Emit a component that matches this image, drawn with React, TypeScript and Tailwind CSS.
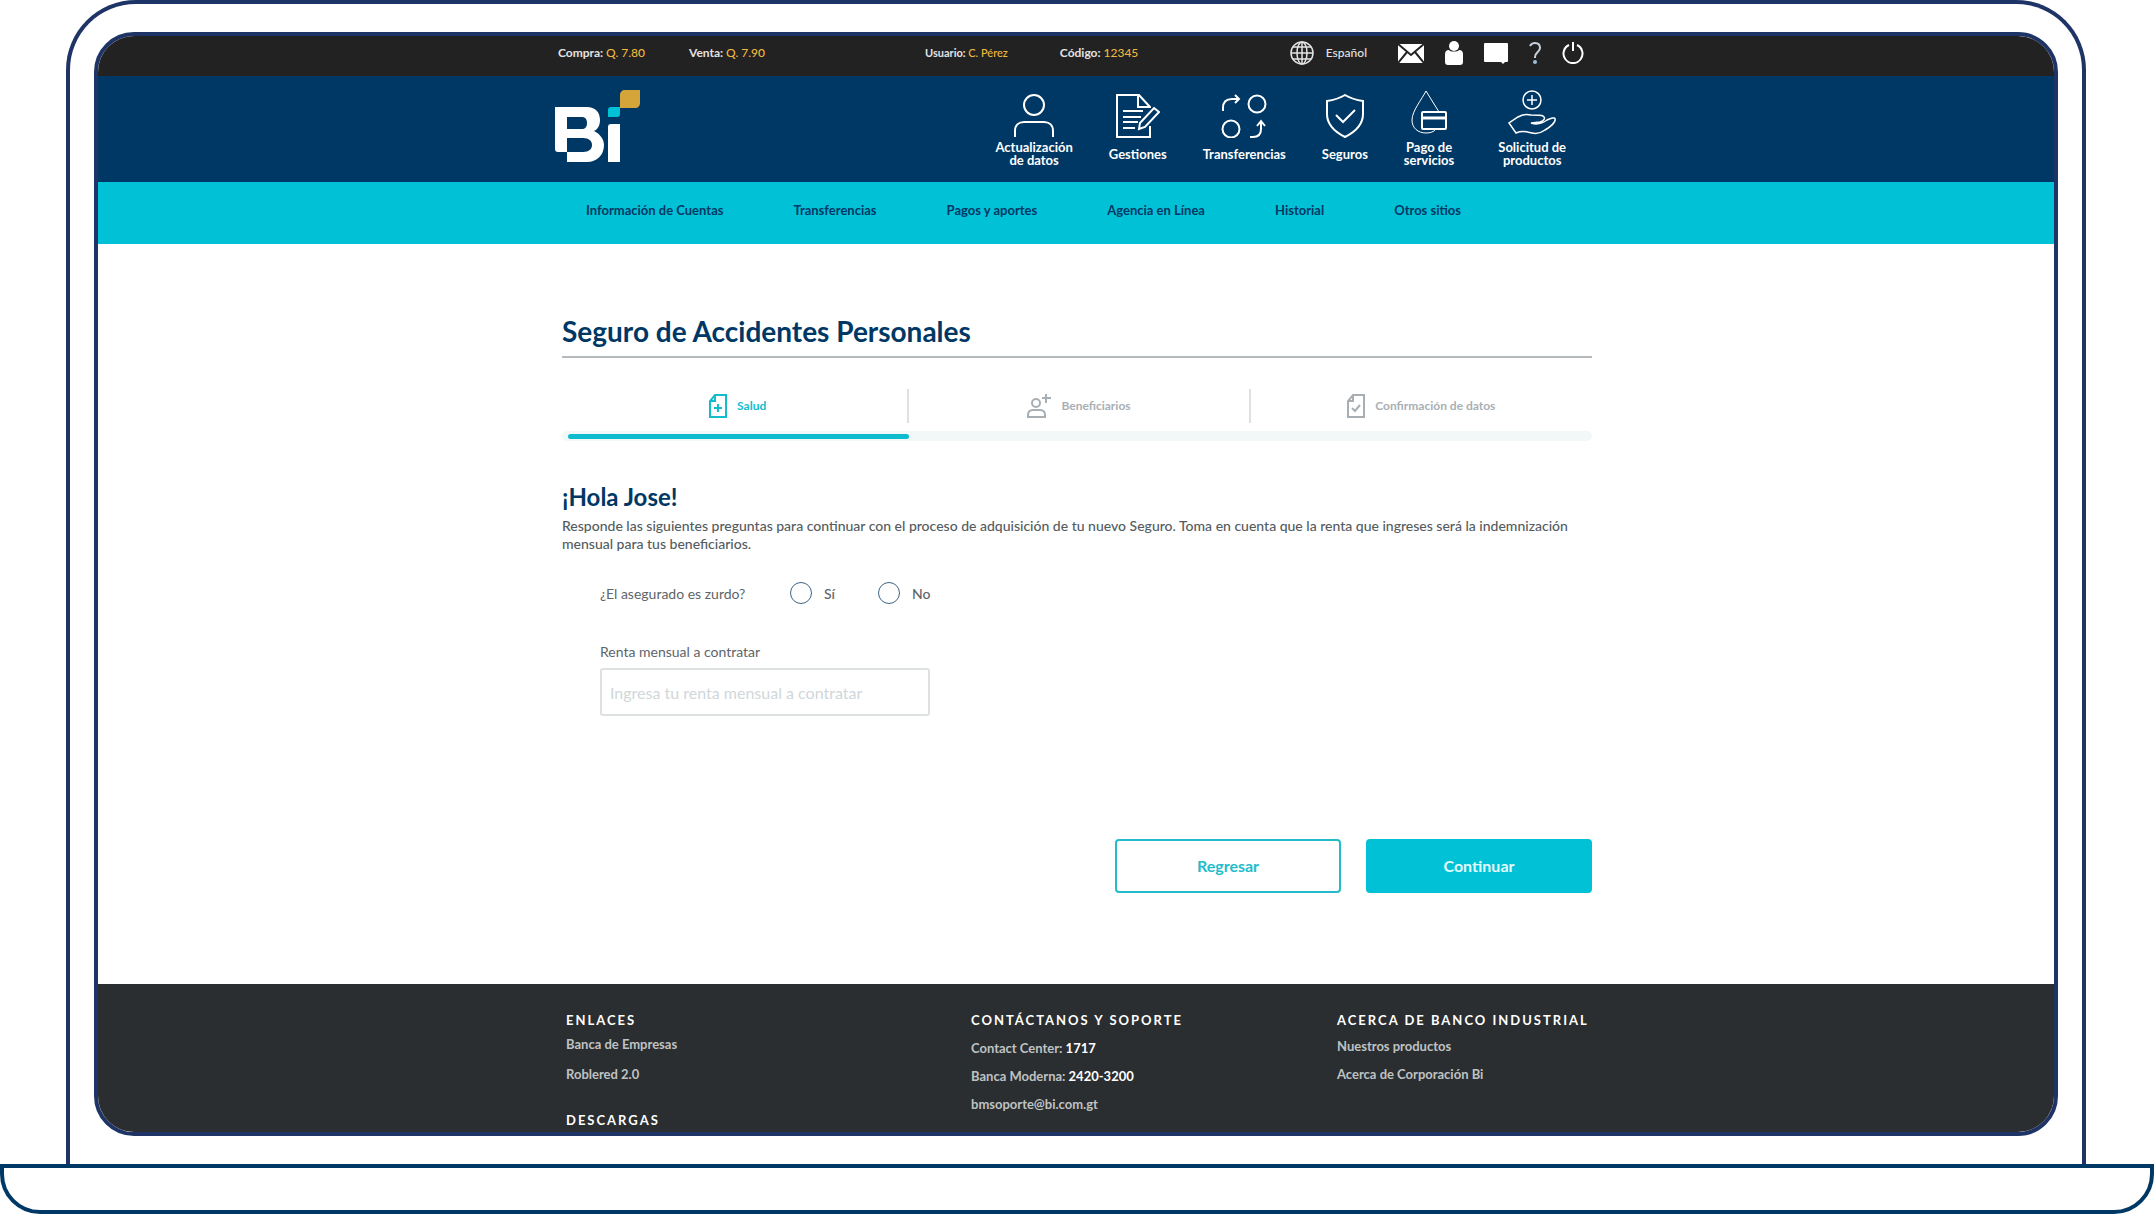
import React, { useState } from 'react';

const SHORTCUTS = [
    {
        label: ['Actualización', 'de datos'],
        icon: (
            <svg className="w-[44px] h-[48px]" viewBox="0 0 44 48" fill="none" stroke="currentColor" strokeWidth="2">
                <circle cx="22" cy="15" r="10" />
                <path d="M3 47v-6c0-6 4-9 9-9h20c5 0 9 3 9 9v6" />
            </svg>
        ),
    },
    {
        label: ['Gestiones'],
        icon: (
            <svg className="w-[44px] h-[48px]" viewBox="0 0 44 48" fill="none" stroke="currentColor" strokeWidth="2">
                <path d="M34 18v-1L23 5H1v42h33V36M22 5v12h12" />
                <path d="M7 21h20M7 27h18M7 32h15M7 38h12" />
                <path d="M38 18l5 4-14 15-6 2 1-6z" />
            </svg>
        ),
    },
    {
        label: ['Transferencias'],
        icon: (
            <svg className="w-[46px] h-[48px]" viewBox="0 0 46 48" fill="none" stroke="currentColor" strokeWidth="2">
                <circle cx="36" cy="14" r="8.500" />
                <circle cx="10" cy="39" r="8.500" />
                <path d="M2 21v-3c0-6 3-9 9-9h7M14 5l4 4-4 4" />
                <path d="M29 47h3c6 0 8-3 8-8v-7M36 36l4-5 4 5" />
            </svg>
        ),
    },
    {
        label: ['Seguros'],
        icon: (
            <svg className="w-[40px] h-[48px]" viewBox="0 0 40 48" fill="none" stroke="currentColor" strokeWidth="2">
                <path d="M20 5c5 3 11 5 18 6v13c0 11-8 18-18 23C10 42 2 35 2 24V11c7-1 13-3 18-6z" />
                <path d="M11 25l7 7 12-12" />
            </svg>
        ),
    },
    {
        label: ['Pago de', 'servicios'],
        icon: (
            <svg className="w-[38px] h-[48px]" viewBox="0 0 38 48" fill="none" stroke="currentColor">
                <path strokeWidth="1" d="M29 22L16 1C12 9 2 21 2 30c0 8 6 13 14 13 4 0 8-1 10-4" />
                <rect x="12" y="22" width="24" height="17" rx="1" strokeWidth="2" />
                <path strokeWidth="3" d="M12 28h24" />
            </svg>
        ),
    },
    {
        label: ['Solicitud de', 'productos'],
        icon: (
            <svg className="w-[50px] h-[48px]" viewBox="0 0 50 48" fill="none" stroke="currentColor" strokeWidth="1.5">
                <circle cx="25" cy="10" r="9" />
                <path d="M25 5v10M20 10h10" />
                <path d="M9 43l-7-10 9-6c5-3 9-3 13-2 5 0 10 0 12 1 3 2 1 5-3 6l-9 1c6 2 12 0 16-3 4-2 8-3 8-1 1 3-5 8-10 11-4 3-9 4-13 3-5-1-9-3-16 0z" />
            </svg>
        ),
    },
];

const SECTIONS = ['Información de Cuentas', 'Transferencias', 'Pagos y aportes', 'Agencia en Línea', 'Historial', 'Otros sitios'];

const Logo: React.FC = () => (
    <svg className="w-[85px] h-[72px]" viewBox="0 0 85 72" role="img" aria-label="Bi">
        <path
            fill="#fff"
            fillRule="evenodd"
            d="M0 17h32c8 0 13 5 13 13 0 5-2 9-6 11 6 3 10 8 10 14 0 10-7 17-17 17H12V62H3c-2 0-3-1-3-3zM12 27v12h15c3 0 5-2 5-6s-2-6-5-6zM12 48v14h16c6 0 9-3 9-7s-3-7-9-7z"
        />
        <path fill="#fff" d="M56 34h9v38H53V37c0-2 1-3 3-3z" />
        <path fill="#00c1d5" d="M56 17h9v7c0 2-1 3-3 3h-9v-7c0-2 1-3 3-3z" />
        <path fill="#d6a53a" d="M70 0h15v13c0 3-2 5-5 5H65V5c0-3 2-5 5-5z" />
    </svg>
);

const TopBar: React.FC = () => (
    <div className="bg-[#222222] text-[#e3e3e3] h-10 shrink-0">
        <div className="max-w-[1036px] h-full mx-auto pr-2.5 pb-1.5 flex items-center text-[12px] font-bold whitespace-nowrap">
            <div className="flex gap-11">
                <span>Compra: <span className="font-medium text-[#f0b840]">Q. 7.80</span></span>
                <span>Venta: <span className="font-medium text-[#f0b840]">Q. 7.90</span></span>
            </div>
            <div className="ml-40 flex items-center gap-[52px]">
                <span className="text-[11px]">Usuario: <span className="font-medium text-[#f0b840]">C. Pérez</span></span>
                <span>Código: <span className="font-medium text-[#f0b840]">12345</span></span>
            </div>
            <div className="ml-auto flex items-center gap-[21px]">
                <button className="flex items-center gap-3 mr-2.5 font-medium">
                    <svg className="w-6 h-6" viewBox="0 0 24 24" fill="none" stroke="currentColor" strokeWidth="1.5">
                        <circle cx="12" cy="12" r="11" />
                        <ellipse cx="12" cy="12" rx="5" ry="11" />
                        <path d="M12 1v22M1 12h22M3 6h18M3 18h18" />
                    </svg>
                    Español
                </button>
                <button aria-label="Mensajes">
                    <svg className="w-[26px] h-[19px]" viewBox="0 0 26 19">
                        <path fill="#fff" d="M0 0h26v19H0z" />
                        <path fill="none" stroke="#222" strokeWidth="2" d="M0 0l13 11L26 0M0 19l9-11M26 19L17 8" />
                    </svg>
                </button>
                <button aria-label="Perfil">
                    <svg className="w-[18px] h-6" viewBox="0 0 18 24" fill="#fff">
                        <circle cx="9" cy="5" r="5" />
                        <path d="M4 9c1 2 9 2 10 0 3 0 4 2 4 4v8c0 2-1 3-3 3H3c-2 0-3-1-3-3v-8c0-2 1-4 4-4z" />
                    </svg>
                </button>
                <button aria-label="Chat">
                    <svg className="w-6 h-[21px]" viewBox="0 0 24 21" fill="#fff">
                        <path d="M0 1q0-1 1-1h22q1 0 1 1v17q0 1-1 1h-2l-2 2-2-2H1q-1 0-1-1z" />
                    </svg>
                </button>
                <button aria-label="Ayuda">
                    <svg className="w-3 h-[22px]" viewBox="0 0 12 22">
                        <path fill="none" stroke="#c9d3db" strokeWidth="2" d="M1 4c1-2 3-3 5-3 3 0 5 2 5 5 0 4-5 4-5 9v1" />
                        <circle cx="6" cy="20" r="2" fill="#9fbdd2" />
                    </svg>
                </button>
                <button aria-label="Salir">
                    <svg className="w-[22px] h-[22px]" viewBox="0 0 22 22" fill="none" stroke="#fff" strokeWidth="2">
                        <path d="M7 3a9.500 9.500 0 1 0 8 0M11 0v9" />
                    </svg>
                </button>
            </div>
        </div>
    </div>
);

const Header: React.FC = () => (
    <header className="shrink-0">
        <div className="bg-[#003865] text-white h-[106px]">
            <div className="max-w-[1036px] h-full mx-auto pr-7 flex items-start justify-between pt-3.5">
                <a href="#inicio" className="-ml-[3px]"><Logo /></a>
                <nav className="flex gap-9">
                    {SHORTCUTS.map(({ label, icon }) => (
                        <a key={label[0]} href="#accesos" className="flex flex-col items-center last:ml-2">
                            {icon}
                            <span className="h-8 flex flex-col justify-center text-center text-[13px] leading-[13px] font-bold">
                                {label.map((line) => <span key={line}>{line}</span>)}
                            </span>
                        </a>
                    ))}
                </nav>
            </div>
        </div>
        <div className="bg-[#00c1d5] h-[62px]">
            <nav className="max-w-[1036px] h-full mx-auto px-7 pb-1 flex items-center gap-[70px] text-[13px] font-bold text-[#003865] whitespace-nowrap">
                {SECTIONS.map((section) => <a key={section} href="#menu">{section}</a>)}
            </nav>
        </div>
    </header>
);

const Steps: React.FC = () => (
    <div>
        <ol className="pl-1.5 grid grid-cols-3 text-[12px] font-bold text-[#a8afb4]">
            <li className="h-[34px] flex items-center justify-center gap-2.5 border-r-2 border-[#dde1e2] text-[#12bccd]" aria-current="step">
                <svg className="w-[18px] h-6" viewBox="0 0 18 24" fill="none" stroke="currentColor" strokeWidth="2">
                    <path d="M6 1h11v22H1V7zM6 1v6H1M9 10v8M5 14h8" />
                </svg>
                Salud
            </li>
            <li className="h-[34px] flex items-center justify-center gap-2.5 border-r-2 border-[#dde1e2]">
                <svg className="w-6 h-6" viewBox="0 0 24 24" fill="none" stroke="currentColor" strokeWidth="2">
                    <circle cx="9" cy="9" r="4" />
                    <path d="M1 23v-2c0-3 2-5 5-5h7c3 0 5 2 5 5v2zM19 0v9M15 4h9" />
                </svg>
                Beneficiarios
            </li>
            <li className="h-[34px] flex items-center justify-center gap-2.5">
                <svg className="w-[18px] h-6" viewBox="0 0 18 24" fill="none" stroke="currentColor" strokeWidth="2">
                    <path d="M6 1h11v22H1V7zM6 1v6H1M5 14l3 3 5-6" />
                </svg>
                Confirmación de datos
            </li>
        </ol>
        <div className="mt-2 h-2.5 rounded-full bg-[#f2f7f7] pl-1.5 flex items-center">
            <div className="h-[5px] w-1/3 rounded-full bg-[#0fbccd]" />
        </div>
    </div>
);

const Footer: React.FC = () => (
    <footer className="shrink-0 bg-[#2b2e30] text-[#bfc2c3]">
        <div className="max-w-[1036px] mx-auto pl-2 pt-[26px] pb-0.5 grid grid-cols-[405fr_366fr_257fr] text-[13px] leading-5 font-bold whitespace-nowrap">
            <div>
                <h2 className="text-white tracking-[2px]">ENLACES</h2>
                <a href="#empresas" className="block mt-1">Banca de Empresas</a>
                <a href="#roblered" className="block mt-2.5">Roblered 2.0</a>
                <h2 className="text-white tracking-[2px] mt-[26px]">DESCARGAS</h2>
            </div>
            <div>
                <h2 className="text-white tracking-[2px]">CONTÁCTANOS Y SOPORTE</h2>
                <p className="mt-2">Contact Center: <span className="text-white">1717</span></p>
                <p className="mt-2">Banca Moderna: <span className="text-white">2420-3200</span></p>
                <a href="mailto:bmsoporte@bi.com.gt" className="block mt-2">bmsoporte@bi.com.gt</a>
            </div>
            <div>
                <h2 className="text-white tracking-[2px]">ACERCA DE BANCO INDUSTRIAL</h2>
                <a href="#productos" className="block mt-1.5">Nuestros productos</a>
                <a href="#corporacion" className="block mt-2">Acerca de Corporación Bi</a>
            </div>
        </div>
    </footer>
);

const App: React.FC = () => {
    const [leftHanded, setLeftHanded] = useState('');
    const [rent, setRent] = useState('');

    return (
        <div className="h-screen flex flex-col bg-white font-['Lato',sans-serif]">
            {/* Laptop lid */}
            <div className="flex-1 min-h-0 ml-[66px] mr-[68px] px-6 py-7 border-4 border-b-0 border-[#1f3466] rounded-t-[70px]">
                <div className="h-full flex flex-col overflow-hidden border-4 border-[#1f3466] rounded-[40px]">
                    <TopBar />
                    <Header />

                    <main className="flex-1 min-h-0">
                        <div className="max-w-[1036px] mx-auto pl-1 pr-0.5 pt-[67px]">
                            <h1 className="text-[28px] leading-10 font-bold text-[#003865] pb-[5px] border-b-2 border-[#b5babd]">
                                Seguro de Accidentes Personales
                            </h1>
                            <div className="mt-[31px]">
                                <Steps />
                            </div>

                            <h2 className="mt-10 text-[24px] leading-8 font-bold text-[#003865]">¡Hola Jose!</h2>
                            <p className="mt-1 -mr-4 text-[14px] leading-[18px] font-medium text-[#545c61]">
                                Responde las siguientes preguntas para continuar con el proceso de adquisición de tu nuevo Seguro. Toma en cuenta que la renta que ingreses será la indemnización mensual para tus beneficiarios.
                            </p>

                            <form className="pl-[38px] text-[14px] text-[#5d656a]" onSubmit={(e) => e.preventDefault()}>
                                <fieldset className="mt-[29px] flex items-center">
                                    <legend className="float-left w-[190px]">¿El asegurado es zurdo?</legend>
                                    {['Sí', 'No'].map((option) => (
                                        <label key={option} className="w-[88px] flex items-center gap-3 font-medium">
                                            <input
                                                type="radio"
                                                name="zurdo"
                                                value={option}
                                                checked={leftHanded === option}
                                                onChange={() => setLeftHanded(option)}
                                                className="appearance-none w-[22px] h-[22px] rounded-full border border-[#3f6384] checked:border-8"
                                            />
                                            {option}
                                        </label>
                                    ))}
                                </fieldset>
                                <label htmlFor="renta" className="block mt-[38px] leading-5">Renta mensual a contratar</label>
                                <input
                                    id="renta"
                                    type="text"
                                    value={rent}
                                    onChange={(e) => setRent(e.target.value)}
                                    placeholder="Ingresa tu renta mensual a contratar"
                                    className="mt-1.5 w-[330px] h-12 px-2 text-[16px] border-2 border-[#dde1e2] rounded-[3px] placeholder:text-[#d0d7da]"
                                />
                                <div className="mt-[123px] flex justify-end gap-[25px] text-[16px] font-bold">
                                    <button type="button" className="w-[226px] h-[54px] rounded-[4px] border-2 border-[#24bccb] text-[#24bccb]">Regresar</button>
                                    <button type="submit" className="w-[226px] h-[54px] rounded-[4px] bg-[#00c1d5] text-[#e3fbfd]">Continuar</button>
                                </div>
                            </form>
                        </div>
                    </main>

                    <Footer />
                </div>
            </div>

            {/* Laptop base */}
            <div className="h-[50px] shrink-0 border-4 border-[#003865] rounded-b-[40px]" />
        </div>
    );
};

export default App;
